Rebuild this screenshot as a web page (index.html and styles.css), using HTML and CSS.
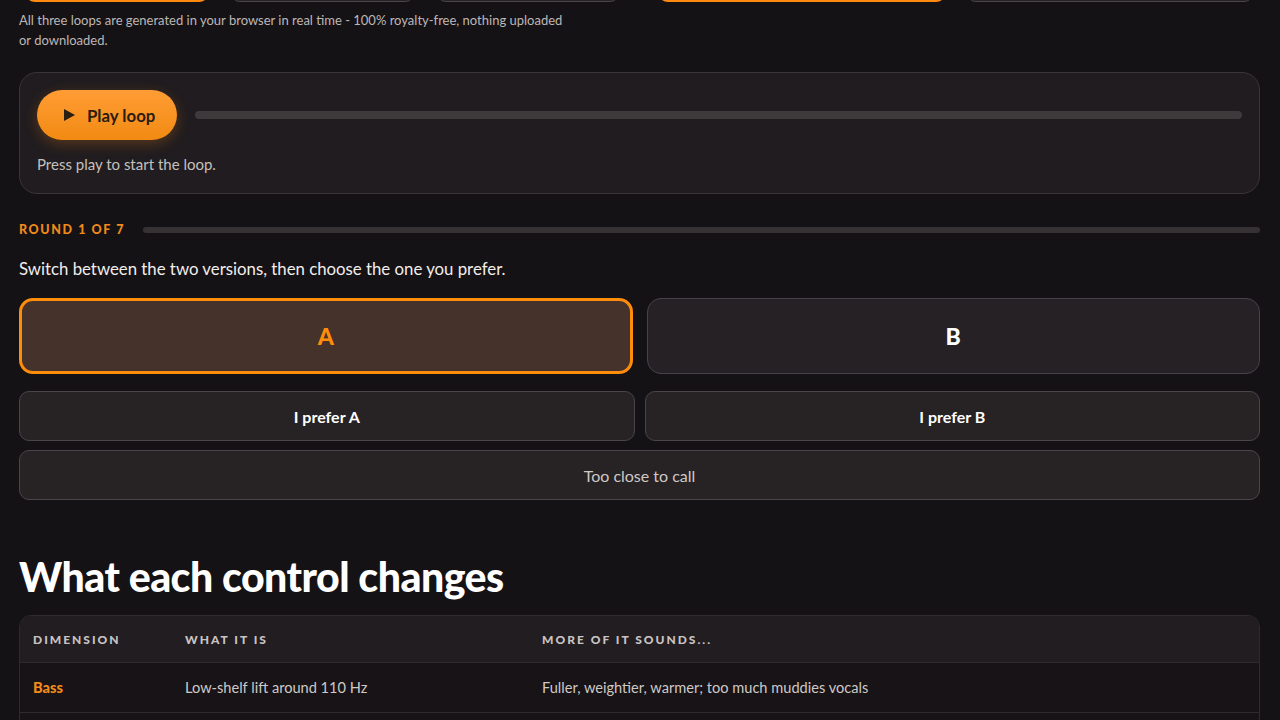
FILE: index.html
```html
<!DOCTYPE html>
<html lang="en">

<head>
    <meta charset="UTF-8">
    <meta name="viewport" content="width=device-width, initial-scale=1.0">
    <title>Loop preference test</title>
    <link rel="stylesheet" href="styles.css">
</head>

<body>
    <div class="page">
        <!-- 顶部：循环选择（按钮只露出底边） -->
        <div class="top">
            <div class="left-col">
                <div class="loop-row">
                    <a class="chip chip-on" href="javascript:;"></a>
                    <a class="chip" href="javascript:;"></a>
                    <a class="chip" href="javascript:;"></a>
                </div>
                <p class="note">All three loops are generated in your browser in real time - 100% royalty-free, nothing uploaded or downloaded.</p>
            </div>
            <div class="right-col">
                <a class="chip chip-on" href="javascript:;"></a>
                <a class="chip" href="javascript:;"></a>
            </div>
        </div>

        <!-- 播放器 -->
        <div class="player">
            <div class="player-row">
                <button class="play-btn">
                    <svg width="14" height="14" viewBox="0 0 14 14"><path d="M2 1 L13 7 L2 13 Z" fill="#2b1d10"/></svg>
                    Play loop
                </button>
                <div class="track"></div>
            </div>
            <p class="status">Press play to start the loop.</p>
        </div>

        <!-- 轮次 -->
        <div class="round">
            <span class="round-label">ROUND 1 OF 7</span>
            <div class="round-track"></div>
        </div>
        <p class="hint">Switch between the two versions, then choose the one you prefer.</p>

        <div class="ab">
            <button class="ab-btn ab-on">A</button>
            <button class="ab-btn">B</button>
        </div>
        <div class="choose">
            <button class="pick">I prefer A</button>
            <button class="pick">I prefer B</button>
        </div>
        <button class="pick tie">Too close to call</button>

        <h2 class="title">What each control changes</h2>

        <div class="table">
            <div class="tr th">
                <div>DIMENSION</div>
                <div>WHAT IT IS</div>
                <div>MORE OF IT SOUNDS...</div>
            </div>
            <div class="tr">
                <div class="dim">Bass</div>
                <div>Low-shelf lift around 110 Hz</div>
                <div>Fuller, weightier, warmer; too much muddies vocals</div>
            </div>
            <div class="tr"></div>
        </div>
    </div>
</body>

</html>
```

FILE: styles.css
```css
* {
    margin: 0;
    padding: 0;
    box-sizing: border-box;
}

body {
    background-color: #151215;
    color: #ece8e6;
    font-family: Lato, "Noto Sans", sans-serif;
    overflow: hidden;
}

.page {
    padding: 0 20px 0 19px;
    margin-top: -38px;
}

button {
    font-family: inherit;
    cursor: pointer;
}

/* 顶部 */
.top {
    display: flex;
    justify-content: space-between;
}

.left-col {
    width: 601px;
    padding-left: 6px;
}

.loop-row {
    display: flex;
    gap: 21px;
}

.right-col {
    display: flex;
    gap: 20px;
    padding-right: 6px;
}

.chip {
    display: block;
    height: 40px;
    width: 185px;
    border-radius: 10px;
    border: 1px solid #4a4548;
    background-color: #242023;
}

.right-col .chip {
    width: 288px;
}

.chip-on {
    border: 2px solid #ff8a0f;
    background-color: #3e2d24;
}

.note {
    margin: 8px 0 0 -6px;
    width: 548px;
    font-size: 13px;
    line-height: 20px;
    color: #bdb7b5;
}

/* 播放器 */
.player {
    margin-top: 22px;
    border: 1px solid #3a3538;
    border-radius: 18px;
    background-color: #201c1f;
    padding: 17px 17px 20px 17px;
}

.player-row {
    display: flex;
    align-items: center;
    gap: 18px;
}

.play-btn {
    display: flex;
    align-items: center;
    gap: 11px;
    height: 50px;
    width: 140px;
    padding: 0 0 0 25px;
    border: none;
    border-radius: 25px;
    background: linear-gradient(180deg, #ff9d35, #f28a12);
    box-shadow: 0 4px 14px rgba(255, 140, 20, .25);
    color: #2b1d10;
    font-size: 16.8px;
    font-weight: 700;
}

.track {
    flex: 1;
    height: 8px;
    border-radius: 4px;
    background-color: #3e3a3c;
}

.status {
    margin-top: 15px;
    font-size: 15px;
    color: #c6c0bd;
}

/* 轮次 */
.round {
    display: flex;
    align-items: center;
    gap: 18px;
    margin-top: 28px;
}

.round-label {
    font-size: 12.5px;
    font-weight: 900;
    letter-spacing: 1.6px;
    color: #f08a1a;
}

.round-track {
    flex: 1;
    height: 6px;
    border-radius: 3px;
    background-color: #363234;
}

.hint {
    margin-top: 21px;
    font-size: 16.8px;
    color: #f2eeec;
}

.ab {
    display: grid;
    grid-template-columns: 1fr 1fr;
    gap: 14px;
    margin-top: 19px;
}

.ab-btn {
    height: 76px;
    border-radius: 14px;
    border: 1px solid #47424a;
    background-color: #252124;
    color: #fff;
    font-size: 23px;
    font-weight: 900;
}

.ab-on {
    border: 3px solid #ff8c0a;
    background-color: #45322a;
    color: #ff8c0a;
}

.choose {
    display: grid;
    grid-template-columns: 1fr 1fr;
    gap: 10px;
    margin-top: 17px;
}

.pick {
    height: 50px;
    border-radius: 10px;
    border: 1px solid #4a4548;
    background-color: #272224;
    color: #fff;
    font-size: 16px;
    font-weight: 700;
}

.tie {
    display: block;
    width: 100%;
    margin-top: 9px;
    font-weight: 400;
    color: #cfc9c6;
}

.title {
    margin-top: 52px;
    font-size: 41px;
    font-weight: 900;
    letter-spacing: -0.5px;
    color: #fff;
    line-height: 50px;
}

/* 表格 */
.table {
    margin-top: 13px;
    border: 1px solid #2e2a2d;
    border-radius: 12px;
    overflow: hidden;
}

.tr {
    display: grid;
    grid-template-columns: 152px 357px 1fr;
    align-items: center;
    height: 50px;
    padding-left: 13px;
    background-color: #171316;
    border-top: 1px solid #2e2a2d;
    font-size: 14.6px;
    color: #cfc9c6;
}

.th {
    height: 46px;
    border-top: none;
    background-color: #211d20;
    font-size: 12px;
    font-weight: 900;
    letter-spacing: 2px;
    color: #c9c3c3;
}

.dim {
    font-weight: 900;
    color: #f08a1a;
}
```
